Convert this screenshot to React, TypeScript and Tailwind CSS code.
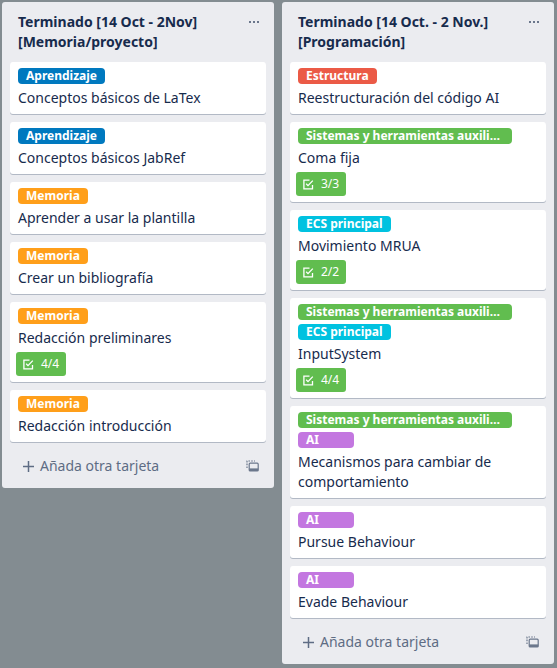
import React from "react";

type Label = { text: string; color: string };
type Card = { labels: Label[]; title: string; check?: string };

const blue = "bg-[#0079bf]";
const orange = "bg-[#ff9f1a]";
const red = "bg-[#eb5a46]";
const green = "bg-[#61bd4f]";
const sky = "bg-[#00c2e0]";
const purple = "bg-[#c377e0]";

const sistemas: Label = { text: "Sistemas y herramientas auxiliares", color: green };
const ecs: Label = { text: "ECS principal", color: sky };
const ai: Label = { text: "AI", color: purple };

const lists: { title: string; cards: Card[] }[] = [
  {
    title: "Terminado [14 Oct - 2Nov] [Memoria/proyecto]",
    cards: [
      { labels: [{ text: "Aprendizaje", color: blue }], title: "Conceptos básicos de LaTex" },
      { labels: [{ text: "Aprendizaje", color: blue }], title: "Conceptos básicos JabRef" },
      { labels: [{ text: "Memoria", color: orange }], title: "Aprender a usar la plantilla" },
      { labels: [{ text: "Memoria", color: orange }], title: "Crear un bibliografía" },
      { labels: [{ text: "Memoria", color: orange }], title: "Redacción preliminares", check: "4/4" },
      { labels: [{ text: "Memoria", color: orange }], title: "Redacción introducción" },
    ],
  },
  {
    title: "Terminado [14 Oct. - 2 Nov.] [Programación]",
    cards: [
      { labels: [{ text: "Estructura", color: red }], title: "Reestructuración del código AI" },
      { labels: [sistemas], title: "Coma fija", check: "3/3" },
      { labels: [ecs], title: "Movimiento MRUA", check: "2/2" },
      { labels: [sistemas, ecs], title: "InputSystem", check: "4/4" },
      { labels: [sistemas, ai], title: "Mecanismos para cambiar de comportamiento" },
      { labels: [ai], title: "Pursue Behaviour" },
      { labels: [ai], title: "Evade Behaviour" },
    ],
  },
];

function CheckIcon() {
  return (
    <svg width="11" height="11" viewBox="0 0 11 11" fill="none" stroke="white" strokeWidth="1.3">
      <path d="M9.5 6V9.8H0.9V1.2H6.5" />
      <path d="M3.2 4.8L5 6.6L9.8 1.6" />
    </svg>
  );
}

function TemplateIcon() {
  return (
    <svg width="13" height="12" viewBox="0 0 13 12" fill="none" stroke="#6b778c" strokeWidth="1.2">
      <path d="M1 8V1H9" strokeDasharray="1.6 1.2" />
      <rect x="3.2" y="3.2" width="9" height="7.8" rx="1" />
      <rect x="3.2" y="8.4" width="9" height="2.6" fill="#6b778c" stroke="none" />
    </svg>
  );
}

function ListColumn({ title, cards }: { title: string; cards: Card[] }) {
  return (
    <div className="w-[272px] shrink-0 flex flex-col bg-[#ebecf0] rounded-[3px]">
      <div className="flex items-start pl-2 pr-[10px] py-[10px]">
        <h2 className="flex-1 px-2 text-sm leading-5 font-bold text-[#172b4d]">{title}</h2>
        <div className="w-5 h-5 flex items-center justify-center gap-[1.5px]">
          <span className="w-[2.5px] h-[2.5px] bg-[#6b778c]" />
          <span className="w-[2.5px] h-[2.5px] bg-[#6b778c]" />
          <span className="w-[2.5px] h-[2.5px] bg-[#6b778c]" />
        </div>
      </div>

      <div className="px-2 flex flex-col">
        {cards.map((card, i) => (
          <div
            key={i}
            className="mb-2 bg-white rounded-[3px] shadow-[0_1px_0_#091e4240] px-2 pt-[6px] pb-[2px]"
          >
            <div className="flex flex-wrap">
              {card.labels.map((label) => (
                <span
                  key={label.text}
                  className={`${label.color} h-4 leading-4 min-w-[56px] max-w-[214px] truncate px-2 mr-1 mb-1 rounded-[4px] text-xs font-bold text-white`}
                >
                  {label.text}
                </span>
              ))}
            </div>
            <div className="mb-1 text-sm leading-5 text-[#172b4d]">{card.title}</div>
            {card.check && (
              <div className="-ml-[2px] mb-1 flex w-fit items-center h-6 pl-[7px] pr-[7px] gap-[7px] rounded-[3px] bg-[#61bd4f] text-xs leading-4 text-white">
                <CheckIcon />
                <span>{card.check}</span>
              </div>
            )}
          </div>
        ))}
      </div>

      <div className="h-[38px] flex items-start justify-between pl-4 pr-3 pt-[6px]">
        <div className="flex items-center text-sm leading-5 text-[#5e6c84]">
          <span className="w-5 h-5 flex items-center justify-center">
            <svg width="11" height="11" viewBox="0 0 11 11" stroke="#5e6c84" strokeWidth="1.5">
              <path d="M5.5 0V11M0 5.5H11" />
            </svg>
          </span>
          <span className="ml-[2px]">Añada otra tarjeta</span>
        </div>
        <span className="w-5 h-5 flex items-center justify-center">
          <TemplateIcon />
        </span>
      </div>
    </div>
  );
}

export default function App() {
  return (
    <div className="w-[557px] h-[668px] overflow-hidden bg-[#838c91] font-['Noto_Sans',sans-serif]">
      <div className="flex items-start gap-2 p-[2px]">
        {lists.map((list) => (
          <ListColumn key={list.title} title={list.title} cards={list.cards} />
        ))}
      </div>
    </div>
  );
}
